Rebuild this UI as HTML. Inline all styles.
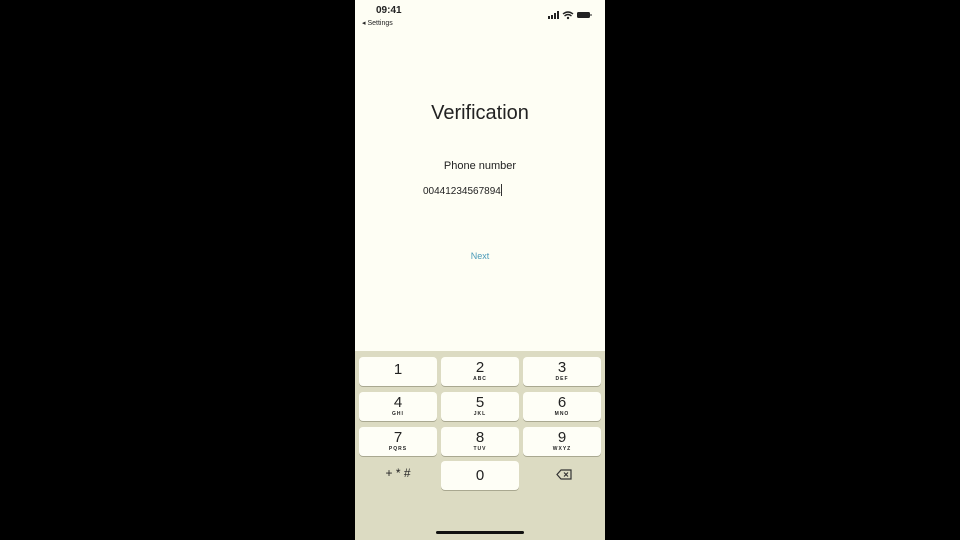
<!DOCTYPE html><html><head><style>
body{margin:0;width:960px;height:540px;background:#000;position:relative;overflow:hidden;font-family:"Liberation Sans",sans-serif;}
#ph{position:absolute;left:355px;top:0;width:250px;height:540px;background:#fefef4;}
.t{position:absolute;color:#222;}
#kb{position:absolute;left:0;top:351px;width:250px;height:189px;background:#dcdbc2;}
.k{position:absolute;width:78px;height:29px;background:#fefef6;border-radius:4px;box-shadow:0 1px 0 #a9a890;text-align:center;color:#222;}
.k b{display:block;font-weight:normal;font-size:15px;line-height:15px;margin-top:3px;}
.k i{display:block;font-style:normal;font-size:5px;font-weight:bold;letter-spacing:1px;margin-top:1px;}
</style></head><body><div id="ph">
<div class="t" style="left:21px;top:5px;font-size:10px;font-weight:bold;">09:41</div>
<div class="t" style="left:7px;top:19px;font-size:7px;">◂ Settings</div>
<svg style="position:absolute;left:193px;top:11px" width="45" height="9"><rect x="0" y="5" width="2" height="3" fill="#222"/><rect x="3" y="4" width="2" height="4" fill="#222"/><rect x="6" y="2" width="2" height="6" fill="#222"/><rect x="9" y="0" width="2" height="8" fill="#222"/><path d="M15 3 Q20 -1 25 3 M16.5 5 Q20 2 23.5 5" stroke="#222" stroke-width="1.4" fill="none"/><circle cx="20" cy="7" r="1.2" fill="#222"/><rect x="29" y="1" width="13" height="6" rx="1.5" fill="#222"/><rect x="42.5" y="3" width="1" height="2" fill="#222"/></svg>
<div class="t" style="left:0;width:250px;text-align:center;top:102px;font-size:20px;">Verification</div>
<div class="t" style="left:0;width:250px;text-align:center;top:160px;font-size:11px;">Phone number</div>
<div class="t" style="left:68px;top:184px;font-size:10px;">00441234567894<span style="display:inline-block;width:1px;height:12px;background:#333;vertical-align:-2px"></span></div>
<div class="t" style="left:0;width:250px;text-align:center;top:251px;font-size:9px;color:#4a9ab8;">Next</div>
<div id="kb">
<div class="k" style="left:4px;top:6px"><b style="margin-top:5px">1</b></div>
<div class="k" style="left:86px;top:6px"><b>2</b><i>ABC</i></div>
<div class="k" style="left:168px;top:6px"><b>3</b><i>DEF</i></div>
<div class="k" style="left:4px;top:41px"><b>4</b><i>GHI</i></div>
<div class="k" style="left:86px;top:41px"><b>5</b><i>JKL</i></div>
<div class="k" style="left:168px;top:41px"><b>6</b><i>MNO</i></div>
<div class="k" style="left:4px;top:76px"><b>7</b><i>PQRS</i></div>
<div class="k" style="left:86px;top:76px"><b>8</b><i>TUV</i></div>
<div class="k" style="left:168px;top:76px"><b>9</b><i>WXYZ</i></div>
<div class="k" style="left:86px;top:110px"><b style="margin-top:7px">0</b></div>
<div class="t" style="left:4px;width:78px;text-align:center;top:115px;font-size:12px;">+ * #</div>
<svg style="position:absolute;left:201px;top:118px" width="16" height="11"><path d="M5 1 H15 V10 H5 L1 5.5 Z" fill="none" stroke="#333" stroke-width="1.2"/><path d="M8 3.5 L12 7.5 M12 3.5 L8 7.5" stroke="#333" stroke-width="1.2"/></svg>
<div style="position:absolute;left:81px;top:180px;width:88px;height:3px;border-radius:2px;background:#111"></div>
</div></div></body></html>
